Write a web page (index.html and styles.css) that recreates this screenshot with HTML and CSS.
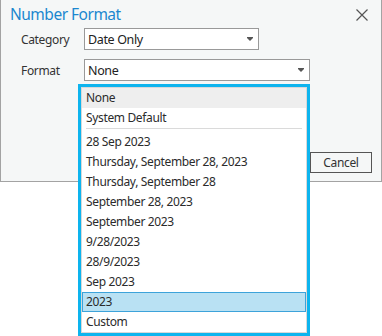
FILE: index.html
```html
<!DOCTYPE html>
<html>
    <head>
        <title>Number Format</title>
        <meta name="viewport" content="width=device-width, initial-scale=1">
        <link rel="stylesheet" href="styles.css">
    </head>
    <body>
        <div class="dialog">
            <div class="title-bar">
                <span class="title">Number Format</span>
                <svg class="close" width="14" height="14" viewBox="0 0 14 14">
                    <path d="M1.5 1.5 L12.5 12.5 M12.5 1.5 L1.5 12.5" stroke="#555" stroke-width="1.2" fill="none"/>
                </svg>
            </div>
            <div class="row">
                <span class="label">Category</span>
                <div class="combo combo-short">
                    <span>Date Only</span>
                    <span class="arrow"></span>
                </div>
            </div>
            <div class="row">
                <span class="label">Format</span>
                <div class="combo combo-long">
                    <span>None</span>
                    <span class="arrow"></span>
                </div>
            </div>
            <div class="footer">
                <button class="button">Cancel</button>
            </div>
        </div>

        <div class="popup">
            <div class="list">
                <div class="item hover">None</div>
                <div class="item">System Default</div>
                <div class="sep"></div>
                <div class="item">28 Sep 2023</div>
                <div class="item">Thursday, September 28, 2023</div>
                <div class="item">Thursday, September 28</div>
                <div class="item">September 28, 2023</div>
                <div class="item">September 2023</div>
                <div class="item">9/28/2023</div>
                <div class="item">28/9/2023</div>
                <div class="item">Sep 2023</div>
                <div class="item selected">2023</div>
                <div class="item">Custom</div>
            </div>
        </div>
    </body>
</html>
```

FILE: styles.css
```css
html { font-family: "Noto Sans", "Open Sans", sans-serif; letter-spacing: -0.35px; }
body { margin: 0; background: #fff; width: 382px; height: 336px; overflow: hidden; position: relative; }

.dialog { box-sizing: border-box; width: 382px; height: 182px; background: #f5f7f7; border: 1px solid #a3a3a3; border-top: none; display: flex; flex-direction: column; }
.title-bar { display: flex; justify-content: space-between; align-items: center; height: 28px; padding: 0 12px 0 9px; }
.title { font-size: 15.5px; letter-spacing: -0.5px; color: #1b87cf; }
.close { display: block; margin-top: 2px; }

.row { display: flex; align-items: center; height: 22px; margin-bottom: 9px; padding-left: 20px; }
.label { width: 63px; font-size: 12px; color: #333; }
.combo { box-sizing: border-box; height: 22px; background: #fff; border: 1px solid #999; display: flex; align-items: center; justify-content: space-between; padding: 0 5px 0 3px; font-size: 12.5px; color: #222; }
.combo-short { width: 175px; }
.combo-long { width: 226px; }
.arrow { width: 0; height: 0; border-left: 3px solid transparent; border-right: 3px solid transparent; border-top: 3px solid #555; box-shadow: 0 -1px 0 0 #555; margin-top: 1px; }

.footer { margin-top: auto; display: flex; justify-content: flex-end; padding: 0 9px 8px 0; }
.button { box-sizing: border-box; width: 62px; height: 21px; background: #f5f7f7; border: 1px solid #555; font-family: inherit; font-size: 12px; letter-spacing: -0.35px; color: #333; padding: 0; }

.popup { position: absolute; left: 78px; top: 84px; box-sizing: border-box; width: 232px; height: 252px; border: 3px solid #0db4ee; background: #fff; }
.list { height: 100%; box-sizing: border-box; border: 1px solid #d8d8d8; overflow: hidden; }
.item { box-sizing: border-box; height: 20px; line-height: 19px; padding-left: 4px; font-size: 12px; color: #2b2b2b; white-space: nowrap; }
.item.hover { background: #eeeeee; }
.item.selected { background: #b9e1f3; border: 1px solid #3da3da; line-height: 17px; padding-left: 3px; }
.sep { height: 4px; box-sizing: border-box; margin: 0 4px; border-top: 1px solid #dadada; }
```
